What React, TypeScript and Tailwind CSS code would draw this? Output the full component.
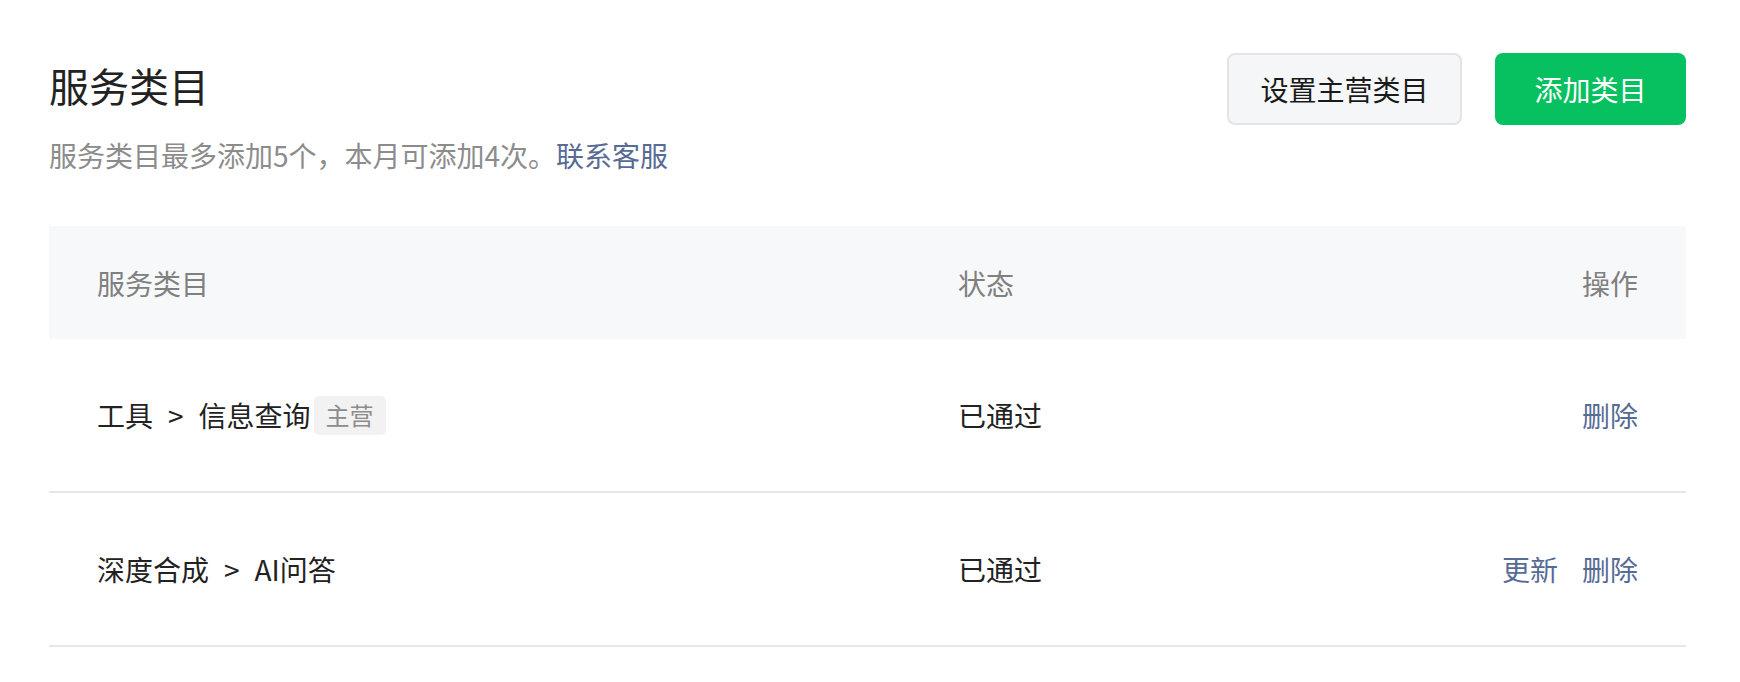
import React from "react";

interface CategoryRow {
  path: string[];
  isMain: boolean;
  status: string;
  actions: string[];
}

const rows: CategoryRow[] = [
  { path: ["工具", "信息查询"], isMain: true, status: "已通过", actions: ["删除"] },
  { path: ["深度合成", "AI问答"], isMain: false, status: "已通过", actions: ["更新", "删除"] },
];

export default function App() {
  return (
    <div
      className="min-h-screen bg-white pl-[49px] pr-[54px] pt-[53px]"
      style={{ fontFamily: '"Noto Sans CJK SC", "Noto Sans", sans-serif' }}
    >
      {/* Page header */}
      <div className="flex items-start justify-between">
        <div>
          <h1 className="mt-[4px] text-[40px] leading-[56px] font-normal text-[#222]">
            服务类目
          </h1>
          <p className="mt-[22px] text-[28px] leading-[40px] text-[#8c8c8c]">
            服务类目最多添加5个，本月可添加4次。
            <a className="text-[#576b95] cursor-pointer">联系客服</a>
          </p>
        </div>

        <div className="flex gap-[33px]">
          <button className="h-[72px] w-[235px] rounded-[8px] border-2 border-[#e4e4e6] bg-[#f5f6f7] text-[28px] text-[#1a1a1a]">
            设置主营类目
          </button>
          <button className="h-[72px] w-[191px] rounded-[8px] bg-[#07c160] text-[28px] text-white">
            添加类目
          </button>
        </div>
      </div>

      {/* Category table */}
      <div className="mt-[51px]">
        <div className="grid h-[113px] grid-cols-[861px_1fr_auto] items-center bg-[#f7f8fa] px-[48px] text-[28px] text-[#808080]">
          <div>服务类目</div>
          <div>状态</div>
          <div className="text-right">操作</div>
        </div>

        {rows.map((row, i) => (
          <div
            key={i}
            className="grid h-[154px] grid-cols-[861px_1fr_auto] items-center border-b-2 border-[#e7e7e9] px-[48px] text-[28px] text-[#222]"
          >
            <div className="flex items-center">
              <span>{row.path[0]}</span>
              <span className="mx-[15px]">&gt;</span>
              <span>{row.path[1]}</span>
              {row.isMain && (
                <span className="ml-[3px] flex h-[39px] items-center rounded-[5px] bg-[#f2f2f2] px-[12px] text-[24px] text-[#8c8c8c]">
                  主营
                </span>
              )}
            </div>
            <div>{row.status}</div>
            <div className="flex justify-end gap-[24px] text-[#576b95]">
              {row.actions.map((a) => (
                <a key={a} className="cursor-pointer">
                  {a}
                </a>
              ))}
            </div>
          </div>
        ))}
      </div>
    </div>
  );
}
